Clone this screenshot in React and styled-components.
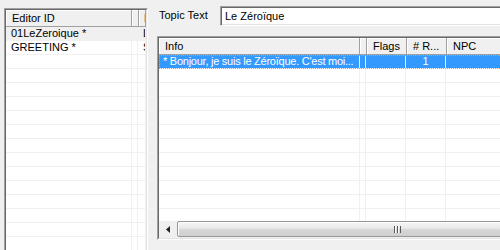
import React from 'react';
import styled, { createGlobalStyle, css } from 'styled-components';

const Global = createGlobalStyle`
  html, body { margin: 0; padding: 0; background: #f0f0f0; }
  body {
    font-family: "Liberation Sans", Arial, sans-serif;
    font-size: 11px;
    color: #000;
  }
`;

const Window = styled.div`
  width: 500px;
  height: 250px;
  overflow: hidden;
  display: flex;
  background: #f0f0f0;
`;

const LeftPane = styled.div`
  flex: 0 0 148px;
  min-width: 0;
  overflow: hidden;
  box-sizing: border-box;
  padding: 8px 0 0 4px;
`;

const RightPane = styled.div`
  flex: 0 0 400px;
  min-width: 0;
  box-sizing: border-box;
  padding: 6px 0 0 9px;
  display: flex;
  flex-direction: column;
`;

const Sunken = styled.div`
  box-sizing: border-box;
  border: 1px solid;
  border-color: #a0a0a0 #ffffff #ffffff #a0a0a0;
  height: ${(p) => p.$h}px;
  display: flex;
  min-width: 0;
`;

const SunkenInner = styled.div`
  flex: 1;
  min-width: 0;
  border: 1px solid;
  border-color: #696969 #e3e3e3 #e3e3e3 #696969;
  background: #fff;
  display: flex;
  flex-direction: column;
  overflow: hidden;
`;

const HeaderRow = styled.div`
  display: flex;
  height: 17px;
  flex: 0 0 17px;
  box-sizing: border-box;
  border-bottom: 1px solid #a0a0a0;
  background: #f0f0f0;
`;

const HeaderCell = styled.div`
  box-sizing: border-box;
  flex: ${(p) => (p.$w ? `0 0 ${p.$w}px` : '1 1 0')};
  min-width: 0;
  border-right: 1px solid #a0a0a0;
  box-shadow: inset 1px 1px 0 #ffffff;
  padding: 0 0 0 ${(p) => p.$pad ?? 6}px;
  line-height: 16px;
  white-space: nowrap;
  overflow: hidden;
`;

const Body = styled.div`
  flex: 1;
  overflow: hidden;
`;

const Row = styled.div`
  display: flex;
  height: 14px;
  box-sizing: border-box;
  border-bottom: 1px solid #f0f0f0;
  ${(p) => p.$sel === 'inactive' && css`background: #f0f0f0;`}
  ${(p) =>
    p.$sel === 'active' &&
    css`
      background: #3399ff;
      color: #fff;
      outline: 1px dotted #f39a4a;
      outline-offset: -1px;
    `}
`;

const Cell = styled.div`
  box-sizing: border-box;
  flex: ${(p) => (p.$w ? `0 0 ${p.$w}px` : '1 1 0')};
  min-width: 0;
  border-right: 1px solid #f0f0f0;
  padding: 0 0 0 ${(p) => p.$pad ?? 5}px;
  line-height: 13px;
  white-space: nowrap;
  overflow: hidden;
  text-align: ${(p) => p.$align || 'left'};
  letter-spacing: ${(p) => (p.$tight ? '-0.25px' : 'normal')};
`;

const TopRow = styled.div`
  display: flex;
  align-items: flex-start;
  height: 20px;
`;

const Label = styled.div`
  flex: 0 0 63px;
  padding: 3px 0 0 2px;
  box-sizing: border-box;
  line-height: 13px;
`;

const TextBox = styled.div`
  flex: 1;
  height: 20px;
  box-sizing: border-box;
  border: 1px solid;
  border-color: #a0a0a0 #ffffff #ffffff #a0a0a0;
  box-shadow: inset 1px 1px 0 #696969, inset -1px -1px 0 #e3e3e3;
  background: #fff;
  padding: 3px 0 0 4px;
  line-height: 13px;
  white-space: nowrap;
`;

const ListArea = styled.div`
  margin-top: 10px;
`;

const ScrollBar = styled.div`
  flex: 0 0 17px;
  height: 17px;
  display: flex;
  background: #f0f0f0;
`;

const ScrollButton = styled.div`
  flex: 0 0 17px;
  display: flex;
  align-items: center;
  justify-content: center;
`;

const Thumb = styled.div`
  flex: 1;
  margin: 0 0 1px 1px;
  box-sizing: border-box;
  border: 1px solid #979797;
  border-radius: 2px;
  background: linear-gradient(#f6f6f6 0%, #e8e8e8 45%, #d6d6d6 55%, #cfcfcf 100%);
  box-shadow: inset 1px 1px 0 #fdfdfd;
  display: flex;
  align-items: center;
  padding-left: ${(p) => p.$grip}px;
`;

const leftRows = [
  { id: '01LeZeroique *', d: 'L', sel: 'inactive' },
  { id: 'GREETING *', d: 'S' },
];

const LeftArrow = () => (
  <svg width="4" height="7" viewBox="0 0 4 7">
    <path d="M4 0 L0 3.5 L4 7 Z" fill="#222" />
  </svg>
);

const Gripper = () => (
  <svg width="7" height="7" viewBox="0 0 7 7">
    <rect x="0" y="0" width="1" height="7" fill="#555" />
    <rect x="1" y="0" width="1" height="7" fill="#fff" />
    <rect x="3" y="0" width="1" height="7" fill="#555" />
    <rect x="4" y="0" width="1" height="7" fill="#fff" />
    <rect x="6" y="0" width="1" height="7" fill="#555" />
  </svg>
);

export default function App() {
  const leftEmpty = Array.from({ length: 16 });
  const rightEmpty = Array.from({ length: 11 });
  return (
    <>
      <Global />
      <Window>
        <LeftPane>
          <Sunken $h={270}>
            <SunkenInner>
              <HeaderRow>
                <HeaderCell $w={126}>Editor ID</HeaderCell>
                <HeaderCell $w={5} />
                <HeaderCell $pad={5}>D</HeaderCell>
              </HeaderRow>
              <Body>
                {leftRows.map((r) => (
                  <Row key={r.id} $sel={r.sel}>
                    <Cell $w={126}>{r.id}</Cell>
                    <Cell $w={5} />
                    <Cell $pad={5}>{r.d}</Cell>
                  </Row>
                ))}
                {leftEmpty.map((_, i) => (
                  <Row key={i}>
                    <Cell $w={126} />
                    <Cell $w={5} />
                    <Cell />
                  </Row>
                ))}
              </Body>
            </SunkenInner>
          </Sunken>
        </LeftPane>
        <RightPane>
          <TopRow>
            <Label>Topic Text</Label>
            <TextBox>Le Zéroïque</TextBox>
          </TopRow>
          <ListArea>
            <Sunken $h={204}>
              <SunkenInner>
                <HeaderRow>
                  <HeaderCell $w={201}>Info</HeaderCell>
                  <HeaderCell $w={5} />
                  <HeaderCell $w={40}>Flags</HeaderCell>
                  <HeaderCell $w={40}># R...</HeaderCell>
                  <HeaderCell>NPC</HeaderCell>
                </HeaderRow>
                <Body>
                  <Row $sel="active">
                    <Cell $w={201} $pad={4} $tight>* Bonjour, je suis le Zéroïque. C'est moi...</Cell>
                    <Cell $w={5} />
                    <Cell $w={40} />
                    <Cell $w={40} $align="center" $pad={0}>1</Cell>
                    <Cell />
                  </Row>
                  {rightEmpty.map((_, i) => (
                    <Row key={i}>
                      <Cell $w={201} />
                      <Cell $w={5} />
                      <Cell $w={40} />
                      <Cell $w={40} />
                      <Cell />
                    </Row>
                  ))}
                </Body>
                <ScrollBar>
                  <ScrollButton>
                    <LeftArrow />
                  </ScrollButton>
                  <Thumb $grip={216}>
                    <Gripper />
                  </Thumb>
                </ScrollBar>
              </SunkenInner>
            </Sunken>
          </ListArea>
        </RightPane>
      </Window>
    </>
  );
}
